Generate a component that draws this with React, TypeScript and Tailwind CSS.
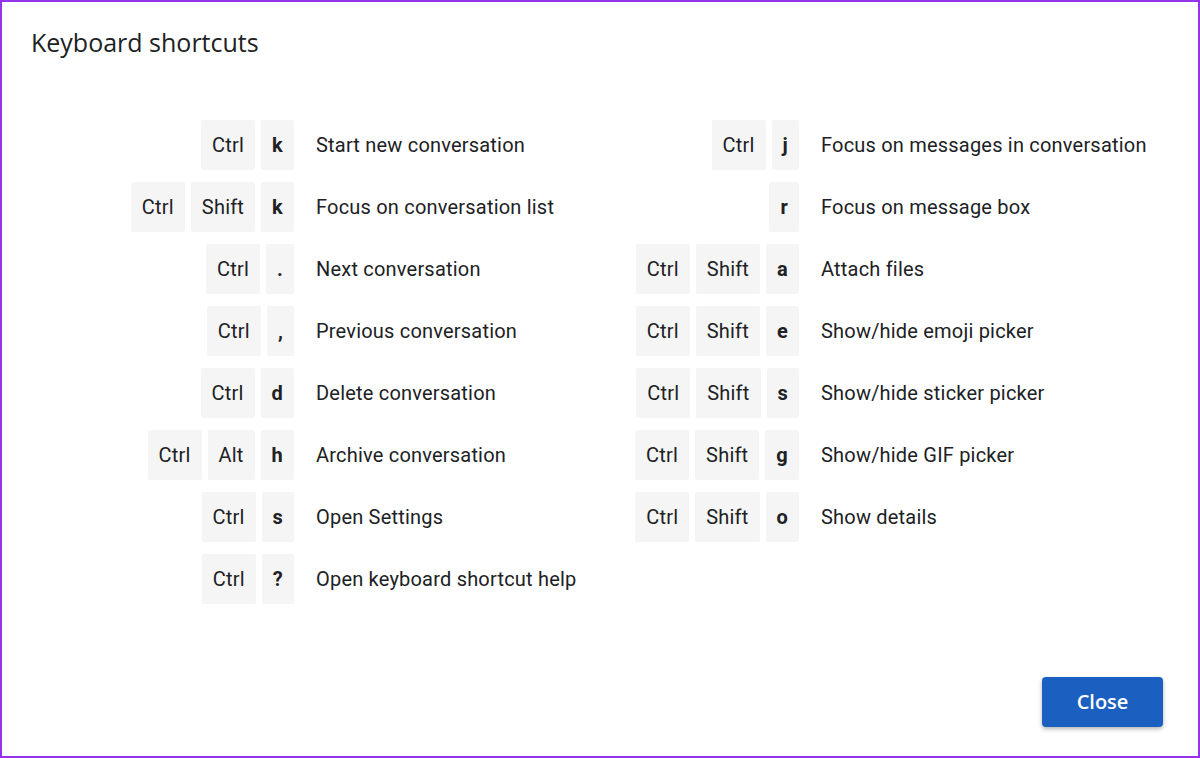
import React from "react";

type Shortcut = { keys: string[]; label: string };

const left: Shortcut[] = [
  { keys: ["Ctrl", "k"], label: "Start new conversation" },
  { keys: ["Ctrl", "Shift", "k"], label: "Focus on conversation list" },
  { keys: ["Ctrl", "."], label: "Next conversation" },
  { keys: ["Ctrl", ","], label: "Previous conversation" },
  { keys: ["Ctrl", "d"], label: "Delete conversation" },
  { keys: ["Ctrl", "Alt", "h"], label: "Archive conversation" },
  { keys: ["Ctrl", "s"], label: "Open Settings" },
  { keys: ["Ctrl", "?"], label: "Open keyboard shortcut help" },
];

const right: Shortcut[] = [
  { keys: ["Ctrl", "j"], label: "Focus on messages in conversation" },
  { keys: ["r"], label: "Focus on message box" },
  { keys: ["Ctrl", "Shift", "a"], label: "Attach files" },
  { keys: ["Ctrl", "Shift", "e"], label: "Show/hide emoji picker" },
  { keys: ["Ctrl", "Shift", "s"], label: "Show/hide sticker picker" },
  { keys: ["Ctrl", "Shift", "g"], label: "Show/hide GIF picker" },
  { keys: ["Ctrl", "Shift", "o"], label: "Show details" },
];

function Key({ k }: { k: string }) {
  const single = k.length === 1;
  return (
    <span
      className={
        "flex h-[50px] items-center justify-center rounded-[2px] bg-[#f5f5f5] text-[20px] tracking-[0.2px] text-[#202124] " +
        (single ? "px-[11px] font-bold" : "px-[11px] font-normal")
      }
    >
      {k}
    </span>
  );
}

function Column({ items }: { items: Shortcut[] }) {
  return (
    <div className="flex w-[505px] shrink-0 flex-col gap-[12px]">
      {items.map((s) => (
        <div key={s.label} className="flex items-center gap-[22px]">
          <div className="flex w-[170px] shrink-0 justify-end gap-[6px]">
            {s.keys.map((k, i) => (
              <Key key={i} k={k} />
            ))}
          </div>
          <span className="whitespace-nowrap text-[20px] tracking-[0.2px] text-[#202124]">{s.label}</span>
        </div>
      ))}
    </div>
  );
}

export default function App() {
  return (
    <div
      className="flex h-[758px] w-[1200px] flex-col overflow-hidden border-2 border-[#9333ea] bg-white"
      style={{ fontFamily: "Roboto, 'Liberation Sans', sans-serif" }}
    >
      <h1
        className="pl-[29px] pt-[25px] text-[25px] font-normal leading-[30px] text-[#202124]"
        style={{ fontFamily: "'Open Sans', Roboto, sans-serif" }}
      >
        Keyboard shortcuts
      </h1>
      <div className="mt-[63px] flex pl-[122px]">
        <Column items={left} />
        <Column items={right} />
      </div>
      <div className="mt-auto flex justify-end pb-[29px] pr-[35px]">
        <button
          className="h-[50px] w-[121px] rounded-[4px] bg-[#1b5fc0] text-[20px] font-semibold text-white shadow-[0_2px_4px_rgba(0,0,0,0.3)]"
          style={{ fontFamily: "'Open Sans', Roboto, sans-serif" }}
        >
          Close
        </button>
      </div>
    </div>
  );
}
